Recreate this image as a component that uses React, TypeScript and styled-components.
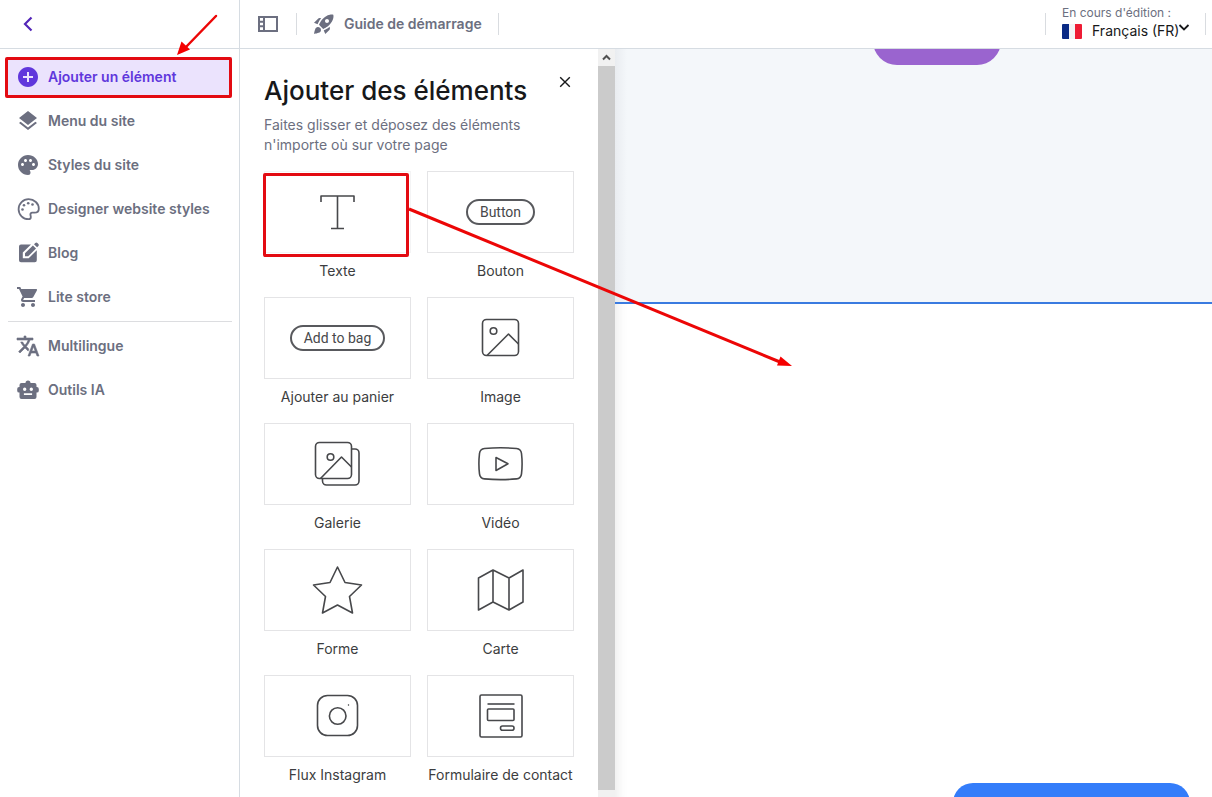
import React from 'react';
import styled, { createGlobalStyle, css } from 'styled-components';
import {
  MdAddCircle,
  MdLayers,
  MdPalette,
  MdShoppingCart,
  MdTranslate,
  MdRocketLaunch,
} from 'react-icons/md';

const color = {
  accent: '#6037dc',
  accentSoft: '#ebe3fd',
  muted: '#6c6f80',
  ink: '#17181a',
  drawing: '#47484b',
  line: '#d6dce2',
  cardLine: '#e4e4e6',
  hero: '#f4f7fa',
  mark: '#e30b12',
};

const GlobalStyle = createGlobalStyle`
  *, *::before, *::after { box-sizing: border-box; }
  body {
    margin: 0;
    background: #fff;
    font-family: Inter, "Liberation Sans", sans-serif;
    font-size: 14px;
    color: ${color.ink};
  }
  button, select { font: inherit; color: inherit; }
`;

const Page = styled.div`
  position: relative;
  display: flex;
  height: 100vh;
  overflow: hidden;
`;

const Sidebar = styled.aside`
  flex: 0 0 240px;
  border-right: 1px solid ${color.line};
`;

const SidebarTop = styled.div`
  display: flex;
  align-items: center;
  height: 49px;
  padding-left: 16px;
  border-bottom: 1px solid ${color.line};
`;

const IconButton = styled.button`
  display: flex;
  align-items: center;
  justify-content: center;
  width: 24px;
  height: 24px;
  padding: 0;
  border: 0;
  background: none;
  cursor: pointer;
`;

const Nav = styled.nav`
  display: flex;
  flex-direction: column;
  gap: 4px;
  padding: 8px 7px 8px 8px;
`;

const markFrame = css`
  &::after {
    content: '';
    position: absolute;
    border: 3px solid ${color.mark};
    border-radius: 2px;
    pointer-events: none;
  }
`;

const NavItem = styled.button<{ $active?: boolean }>`
  position: relative;
  display: flex;
  align-items: center;
  gap: 8px;
  height: 40px;
  padding: 0 8px;
  border: 0;
  background: ${(p) => (p.$active ? color.accentSoft : 'transparent')};
  color: ${(p) => (p.$active ? color.accent : color.muted)};
  font-weight: 600;
  text-align: left;
  white-space: nowrap;
  cursor: pointer;

  svg { flex: none; width: 24px; height: 24px; }

  ${(p) => p.$active && markFrame}
  &::after { inset: 0 0 -1px -3px; }
`;

const NavText = styled.span`
  padding-bottom: 2px;
`;

const LanguagesIcon = styled(MdTranslate)`
  path:not([fill='none']) {
    stroke: currentColor;
    stroke-width: 0.6;
  }
`;

const NavDivider = styled.hr`
  width: 100%;
  height: 1px;
  margin: 0;
  border: 0;
  background: #dcdde0;
`;

const Main = styled.div`
  flex: 1;
  min-width: 0;
  display: flex;
  flex-direction: column;
`;

const TopBar = styled.header`
  flex: none;
  display: flex;
  align-items: center;
  height: 49px;
  padding: 0 6px 0 16px;
  border-bottom: 1px solid ${color.line};
`;

const Separator = styled.span`
  width: 1px;
  height: 22px;
  background: #d9dce0;
`;

const PanelToggle = styled(IconButton)`
  margin-right: 16px;
`;

const Guide = styled.button`
  display: flex;
  align-items: center;
  gap: 8px;
  padding: 0 16px 0 15px;
  border: 0;
  background: none;
  color: ${color.muted};
  font-weight: 600;
  cursor: pointer;
`;

const Language = styled.div`
  display: grid;
  grid-template-columns: 20px auto 12px;
  column-gap: 8px;
  align-items: center;
  margin-left: 16px;
  margin-right: 15px;
  padding-bottom: 2px;
`;

const Spacer = styled.span`
  flex: 1;
`;

const LanguageLabel = styled.label`
  grid-column: 1 / -1;
  color: ${color.muted};
  font-size: 12px;
  line-height: 16px;
`;

const LanguageSelect = styled.select`
  appearance: none;
  height: 20px;
  padding: 0;
  margin-right: -10px;
  margin-left: 2px;
  border: 0;
  background: none;
  line-height: 20px;
`;

const Workspace = styled.div`
  flex: 1;
  min-height: 0;
  display: flex;
`;

const Panel = styled.section`
  flex: 0 0 358px;
  padding: 24px;
  overflow: hidden;
`;

const PanelHead = styled.div`
  display: flex;
  justify-content: space-between;
  align-items: flex-start;
  margin-right: -3px;
`;

const Title = styled.h1`
  margin: 0;
  font-size: 26px;
  font-weight: 500;
  line-height: 36px;
  white-space: nowrap;
`;

const CloseButton = styled(IconButton)`
  margin-top: -3px;
`;

const Intro = styled.p`
  margin: 6px 0 16px;
  color: ${color.muted};
  font-size: 14px;
  line-height: 20px;
`;

const Grid = styled.div`
  display: grid;
  grid-template-columns: 1fr 1fr;
  gap: 16px;
`;

const Tile = styled.button`
  display: flex;
  flex-direction: column;
  padding: 0;
  height: 110px;
  border: 0;
  background: none;
  color: #3c3d40;
  cursor: grab;
`;

const Preview = styled.span<{ $marked?: boolean }>`
  position: relative;
  display: flex;
  align-items: center;
  justify-content: center;
  width: 100%;
  height: 82px;
  border: 1px solid ${(p) => (p.$marked ? '#f4f4f5' : color.cardLine)};

  ${(p) => p.$marked && markFrame}
  &::after { inset: 1px 1px -5px -2px; }
`;

const TileLabel = styled.span`
  width: 100%;
  padding-top: 8px;
  line-height: 20px;
  text-align: center;
  white-space: nowrap;
`;

const Pill = styled.span`
  padding: 0 12px;
  border: 2px solid #58595d;
  border-radius: 13px;
  color: ${color.drawing};
  font-family: Roboto, sans-serif;
  line-height: 22px;
`;

const Scrollbar = styled.div`
  flex: 0 0 17px;
  display: flex;
  flex-direction: column;
  padding-bottom: 7px;
  background: #f1f1f1;
`;

const ScrollUp = styled.span`
  display: flex;
  align-items: center;
  justify-content: center;
  height: 17px;
`;

const ScrollThumb = styled.span`
  flex: 1;
  background: #cbcbcb;
`;

const Canvas = styled.main`
  flex: 1;
  position: relative;
  min-width: 0;
  box-shadow: inset 14px 0 12px -12px rgba(0, 0, 0, 0.09);
`;

const Hero = styled.div`
  display: flex;
  justify-content: flex-end;
  align-items: flex-start;
  height: 255px;
  padding-right: 211px;
  border-bottom: 2px solid #3a7be0;
  overflow: hidden;
  background: linear-gradient(90deg, #e9ecf0, ${color.hero} 12px);
`;

const HeroButton = styled.button`
  width: 128px;
  height: 48px;
  margin-top: -32px;
  border: 0;
  border-radius: 24px;
  background: #9a64cf;
`;

const FloatingButton = styled.button`
  position: absolute;
  right: 22px;
  bottom: -26px;
  width: 237px;
  height: 40px;
  border: 0;
  border-radius: 20px;
  background: #347dfa;
`;

const Annotations = styled.svg`
  position: absolute;
  top: 0;
  left: 0;
  pointer-events: none;
`;

const line = {
  fill: 'none',
  stroke: color.drawing,
  strokeWidth: 1.6,
  strokeLinejoin: 'round' as const,
};

const PaletteOutlineIcon = () => (
  <svg viewBox="0 0 24 24" fill="none" stroke="currentColor" strokeWidth="1.800" aria-hidden="true">
    <path d="M12.600 2.200c5.700 0 10.200 4.300 10.200 9.500 0 2.800-1.900 4-4.300 4h-2.300c-1.300 0-2 .9-1.800 2.100.2 1 .5 1.500.4 2.500-.1 1.200-1 1.900-2.200 1.900A10 10 0 0 1 12.600 2.200Z" />
    <g fill="currentColor" stroke="none">
      <circle cx="6.500" cy="12.500" r="1.300" />
      <circle cx="8" cy="8.300" r="1.300" />
      <circle cx="12.200" cy="6.300" r="1.300" />
      <circle cx="16.500" cy="7.500" r="1.300" />
    </g>
  </svg>
);

const BlogIcon = () => (
  <svg viewBox="0 0 24 24" fill="currentColor" aria-hidden="true">
    <path d="M5 3.500h10L6.800 11.400v5.800h5.900L20.800 9.300v10a2 2 0 0 1-2 2H5a2 2 0 0 1-2-2V5.500a2 2 0 0 1 2-2Z" />
    <path d="M9 12.200 16.900 4.500l3.100 3.100-7.800 7.700H9Z" />
    <path d="m18 3.200 1.300-1.200a1.500 1.500 0 0 1 2.100 0l1 1a1.500 1.500 0 0 1 0 2.100l-1.300 1.200Z" />
  </svg>
);

const BotIcon = () => (
  <svg viewBox="0 0 24 24" fill="currentColor" fillRule="evenodd" aria-hidden="true">
    <path d="M9.500 5a2.500 2.500 0 0 1 5 0h4a2 2 0 0 1 2 2v2h.4a1.900 1.900 0 0 1 1.900 1.900v1.800a1.900 1.900 0 0 1-1.900 1.900h-.4V19a2 2 0 0 1-2 2h-13a2 2 0 0 1-2-2v-4.400h-.4a1.900 1.900 0 0 1-1.900-1.900v-1.800A1.900 1.900 0 0 1 3.100 9h.4V7a2 2 0 0 1 2-2ZM8.700 9.500a1.700 1.700 0 1 0 0 3.400 1.700 1.700 0 0 0 0-3.400Zm6.600 0a1.700 1.700 0 1 0 0 3.400 1.700 1.700 0 0 0 0-3.400ZM7.900 15.200v1.800h8.200v-1.800Z" />
  </svg>
);

const TextDrawing = () => (
  <svg width="36" height="36" viewBox="0 0 36 36" {...line}>
    <path d="M1 8V2h33v6M17.500 2v32.500M11 34.500h13" />
  </svg>
);

const ImageDrawing = () => (
  <svg width="40" height="40" viewBox="0 0 40 40" {...line}>
    <rect x="1.500" y="1.500" width="36" height="36" rx="4" />
    <circle cx="12.500" cy="13" r="3.300" />
    <path d="M6 37.500 27.500 16 37.500 26" />
  </svg>
);

const GalleryDrawing = () => (
  <svg width="48" height="48" viewBox="0 0 48 48" {...line}>
    <rect x="1.500" y="2.500" width="36" height="36" rx="4" />
    <circle cx="16.500" cy="17" r="3.300" />
    <path d="M6.500 38.500 27.500 17 37.500 27M37.500 9H41a4 4 0 0 1 4 4v28a4 4 0 0 1-4 4H12.500a4 4 0 0 1-4-4v-2" />
  </svg>
);

const VideoDrawing = () => (
  <svg width="48" height="36" viewBox="0 0 48 36" {...line}>
    <path d="M7.500 2.500q16-1.400 32 0 4.500.4 5 5 1.200 10.200 0 20.400-.5 4.600-5 5-16 1.400-32 0-4.500-.4-5-5-1.200-10.200 0-20.400.500-4.600 5-5Z" />
    <path d="M19 11.500v13L31 17.800Z" />
  </svg>
);

const StarDrawing = () => (
  <svg width="52" height="52" viewBox="0 0 52 52" {...line}>
    <path d="m25.500 3 7.500 15.500L49.500 21 37.500 32.500 40.500 49l-15-8-15 8 3-16.500L1.500 21l16.500-2.500Z" />
  </svg>
);

const MapDrawing = () => (
  <svg width="48" height="44" viewBox="0 0 48 44" {...line}>
    <path d="m1.500 10 14.500-8 16 8 14-8v32l-14 8-16-8-14.500 8ZM16 2v32M32 10v32" />
  </svg>
);

const InstagramDrawing = () => (
  <svg width="44" height="44" viewBox="0 0 44 44" {...line}>
    <rect x="1.500" y="1.500" width="40" height="40" rx="10" />
    <circle cx="21.700" cy="22" r="8.300" />
    <circle cx="32.500" cy="11" r=".4" strokeWidth="1" />
  </svg>
);

const FormDrawing = () => (
  <svg width="44" height="44" viewBox="0 0 44 44" {...line}>
    <rect x="1" y="1" width="42" height="42" rx="1.500" />
    <path d="M8.500 10h27" />
    <rect x="8.500" y="15" width="26.500" height="11.500" rx="1" />
    <rect x="21.500" y="32" width="13.500" height="4.300" rx="2" />
  </svg>
);

const tiles: { label: string; drawing: React.ReactNode; marked?: boolean }[] = [
  { label: 'Texte', drawing: <TextDrawing />, marked: true },
  { label: 'Bouton', drawing: <Pill>Button</Pill> },
  { label: 'Ajouter au panier', drawing: <Pill>Add to bag</Pill> },
  { label: 'Image', drawing: <ImageDrawing /> },
  { label: 'Galerie', drawing: <GalleryDrawing /> },
  { label: 'Vidéo', drawing: <VideoDrawing /> },
  { label: 'Forme', drawing: <StarDrawing /> },
  { label: 'Carte', drawing: <MapDrawing /> },
  { label: 'Flux Instagram', drawing: <InstagramDrawing /> },
  { label: 'Formulaire de contact', drawing: <FormDrawing /> },
];

const siteItems = [
  { label: 'Ajouter un élément', icon: <MdAddCircle />, active: true },
  { label: 'Menu du site', icon: <MdLayers /> },
  { label: 'Styles du site', icon: <MdPalette /> },
  { label: 'Designer website styles', icon: <PaletteOutlineIcon /> },
  { label: 'Blog', icon: <BlogIcon /> },
  { label: 'Lite store', icon: <MdShoppingCart /> },
];

const toolItems = [
  { label: 'Multilingue', icon: <LanguagesIcon /> },
  { label: 'Outils IA', icon: <BotIcon /> },
];

export default function App() {
  return (
    <Page>
      <GlobalStyle />
      <Sidebar>
        <SidebarTop>
          <IconButton aria-label="Retour">
            <svg width="24" height="24" viewBox="0 0 24 24" fill="none" stroke="#5326b8" strokeWidth="2.200">
              <path d="m15.500 5.500-6.500 6.500 6.500 6.500" />
            </svg>
          </IconButton>
        </SidebarTop>
        <Nav>
          {siteItems.map((item) => (
            <NavItem key={item.label} $active={item.active}>
              {item.icon}
              <NavText>{item.label}</NavText>
            </NavItem>
          ))}
          <NavDivider />
          {toolItems.map((item) => (
            <NavItem key={item.label}>
              {item.icon}
              <NavText>{item.label}</NavText>
            </NavItem>
          ))}
        </Nav>
      </Sidebar>

      <Main>
        <TopBar>
          <PanelToggle aria-label="Afficher le panneau">
            <svg width="20" height="16" viewBox="0 0 20 16" fill="none" stroke={color.muted} strokeWidth="2">
              <path d="M1 1h18v14H1ZM6 1v14M1 5.700h5M1 10.300h5" />
            </svg>
          </PanelToggle>
          <Separator />
          <Guide>
            <MdRocketLaunch size={24} />
            <NavText>Guide de démarrage</NavText>
          </Guide>
          <Separator />
          <Spacer />
          <Separator />
          <Language>
            <LanguageLabel htmlFor="language">En cours d'édition :</LanguageLabel>
            <svg width="20" height="15" viewBox="0 0 20 15" aria-hidden="true">
              <path fill="#0a2a85" d="M1 0h6v15H1a1 1 0 0 1-1-1V1a1 1 0 0 1 1-1Z" />
              <path fill="#f4f4f6" d="M7 0h6v15H7Z" />
              <path fill="#ee1c35" d="M13 0h6a1 1 0 0 1 1 1v13a1 1 0 0 1-1 1h-6Z" />
            </svg>
            <LanguageSelect id="language" defaultValue="fr">
              <option value="fr">Français (FR)</option>
            </LanguageSelect>
            <svg width="12" height="16" viewBox="0 0 12 16" fill="none" stroke={color.ink} strokeWidth="1.800" aria-hidden="true">
              <path d="m1.500 2 4.500 4.500L10.500 2" />
            </svg>
          </Language>
          <Separator />
        </TopBar>

        <Workspace>
          <Panel>
            <PanelHead>
              <Title>Ajouter des éléments</Title>
              <CloseButton aria-label="Fermer">
                <svg width="12" height="12" viewBox="0 0 12 12" fill="none" stroke={color.ink} strokeWidth="1.400">
                  <path d="m1.200 1.200 9.600 9.600M10.800 1.200l-9.600 9.600" />
                </svg>
              </CloseButton>
            </PanelHead>
            <Intro>
              Faites glisser et déposez des éléments
              <br />
              n'importe où sur votre page
            </Intro>
            <Grid>
              {tiles.map((t) => (
                <Tile key={t.label}>
                  <Preview $marked={t.marked}>{t.drawing}</Preview>
                  <TileLabel>{t.label}</TileLabel>
                </Tile>
              ))}
            </Grid>
          </Panel>
          <Scrollbar aria-hidden="true">
            <ScrollUp>
              <svg width="9" height="7" viewBox="0 0 9 7" fill="none" stroke="#505050" strokeWidth="2">
                <path d="m1 5.500 3.500-3.500L8 5.500" />
              </svg>
            </ScrollUp>
            <ScrollThumb />
          </Scrollbar>
          <Canvas>
            <Hero><HeroButton aria-label="Action" /></Hero>
            <FloatingButton aria-label="Aide" />
          </Canvas>
        </Workspace>
      </Main>

      <Annotations width="800" height="380" viewBox="0 0 800 380" aria-hidden="true">
        <g stroke="#ec0606" strokeWidth="3" strokeLinecap="round">
          <path d="M216 16 186 47" strokeWidth="2.500" />
          <path d="M409 209 780 362" strokeLinecap="butt" />
        </g>
        <g fill="#f50000">
          <path d="m177 55 4.500-13.500 8.500 8Z" />
          <path d="m792 366-15-.500 3.500-9Z" />
        </g>
      </Annotations>
    </Page>
  );
}
